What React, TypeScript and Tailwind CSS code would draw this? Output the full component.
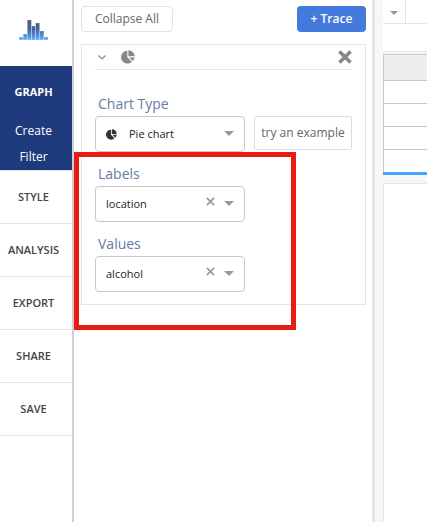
import { useState } from "react";

const bars = [
  [0, 3], [4.15, 6], [8.3, 20], [12.45, 14], [16.6, 17], [20.75, 9], [24.9, 3],
];

function Logo() {
  return (
    <svg width="29" height="20" viewBox="0 0 29 20" aria-label="Logo" role="img">
      <defs>
        <linearGradient id="bar" gradientUnits="userSpaceOnUse" x1="0" y1="0" x2="0" y2="20">
          <stop offset="0" stopColor="#4c5873" />
          <stop offset="0.5" stopColor="#42699f" />
          <stop offset="0.8" stopColor="#5590dc" />
          <stop offset="1" stopColor="#6db0fa" />
        </linearGradient>
      </defs>
      {bars.map(([x, h]) => (
        <rect key={x} x={x} y={20 - h} width="4.1" height={h} fill="url(#bar)" stroke="#fff" strokeOpacity="0.35" strokeWidth="0.8" />
      ))}
    </svg>
  );
}

function PieIcon({ size }: { size: number }) {
  return (
    <svg width={size} height={size} viewBox="0 0 14 14" fill="currentColor" aria-hidden="true">
      <path d="M6.3 .8V7.2L10.9 11.8A6.4 6.4 0 1 1 6.3 .8Z" />
      <path d="M7.4.3A6.3 6.3 0 0 1 13.7 6.3H7.4Z" />
      <path d="M8.2 7.4H13.6A6 6 0 0 1 11.8 11Z" />
    </svg>
  );
}

function Cross({ size, weight }: { size: number; weight: number }) {
  return (
    <svg width={size} height={size} viewBox="0 0 14 14" fill="none" stroke="currentColor" strokeWidth={weight} aria-hidden="true">
      <path d="M1.4 1.4 12.6 12.6M12.6 1.4 1.4 12.6" />
    </svg>
  );
}

function Field({ id, label, options, chart }: { id: string; label: string; options: string[]; chart?: boolean }) {
  const [value, setValue] = useState(options[0]);
  return (
    <div className="w-[150px]">
      <label htmlFor={id} className="block pl-[3px] text-sm leading-6 text-[#667ba3]">{label}</label>
      <div className="relative">
        <select
          id={id}
          value={value}
          onChange={(e) => setValue(e.target.value)}
          className={`block h-9 w-full appearance-none rounded border border-[#c8c8c8] bg-white pr-12 text-[11px] text-[#222] ${chart ? "pl-[33px]" : "pl-[10px]"}`}
        >
          {!chart && <option value=""></option>}
          {options.map((o) => <option key={o}>{o}</option>)}
        </select>
        {chart ? (
          <span className="pointer-events-none absolute top-[13px] left-[11px] text-[#333]"><PieIcon size={11} /></span>
        ) : (
          <button type="button" aria-label={`Clear ${label}`} onClick={() => setValue("")} className="absolute top-[11px] right-[30px] text-[#999]">
            <Cross size={9} weight={2.6} />
          </button>
        )}
        <svg className="pointer-events-none absolute top-[15px] right-[11px] text-[#999]" width="10" height="5" viewBox="0 0 10 5" aria-hidden="true">
          <path d="M0 0H10L5 5Z" fill="currentColor" />
        </svg>
      </div>
    </div>
  );
}

const sections = ["STYLE", "ANALYSIS", "EXPORT", "SHARE", "SAVE"];

export default function App() {
  return (
    <div className="flex min-h-screen bg-white font-['Open_Sans',sans-serif] text-xs">
      <nav className="w-[74px] shrink-0 border-r-2 border-[#cfcfcf] text-center text-[11px]">
        <div className="flex h-[66px] justify-center pt-5 pr-[5px]"><Logo /></div>
        <div className="flex h-[105px] flex-col items-center border-b border-[#e4e4e4] bg-[#1f3a7d] pt-4 pr-[5px] text-white">
          <button type="button" className="mb-4 leading-5 font-bold">GRAPH</button>
          <button type="button" className="text-xs leading-[26px]">Create</button>
          <button type="button" className="text-xs leading-[26px]">Filter</button>
        </div>
        {sections.map((s) => (
          <button key={s} type="button" className="block h-[53px] w-full border-b border-[#e4e4e4] pr-[5px] font-semibold text-[#444]">{s}</button>
        ))}
      </nav>

      <main className="relative min-w-0 flex-1 pt-[6px] pr-[6px] pl-[7px]">
        <div className="flex justify-between">
          <button type="button" className="h-[26px] w-[92px] rounded border border-[#e2e2e2] text-[#666]">Collapse All</button>
          <button type="button" className="h-[26px] w-[69px] rounded bg-[#447adb] font-semibold text-white">+ Trace</button>
        </div>
        <section className="mt-3 border border-[#e5e5e5] px-[13px] pb-3">
          <header className="flex h-[25px] items-center border-b border-[#e5e5e5] text-[#888]">
            <button type="button" aria-label="Collapse trace" className="ml-[3px]">
              <svg width="8" height="5" viewBox="0 0 8 5" fill="none" stroke="currentColor" strokeWidth="1.2" aria-hidden="true"><path d="M.5.5 4 4 7.5.5" /></svg>
            </button>
            <span className="ml-[15px]"><PieIcon size={14} /></span>
            <button type="button" aria-label="Remove trace" className="ml-auto"><Cross size={14} weight={3.6} /></button>
          </header>
          <div className="mt-[22px] flex flex-col gap-[10px]">
            <div className="flex items-start justify-between">
              <Field id="chart-type" label="Chart Type" options={["Pie chart"]} chart />
              <button type="button" className="mt-6 h-[34px] w-[98px] rounded-xs border border-[#ddd] text-xs whitespace-nowrap text-[#666]">try an example</button>
            </div>
            <Field id="labels" label="Labels" options={["location"]} />
            <Field id="values" label="Values" options={["alcohol"]} />
          </div>
        </section>
        <div className="pointer-events-none absolute top-[152px] left-0 h-[178px] w-[222px] border-5 border-[#e81c16]" />
      </main>

      <aside className="flex w-[55px] shrink-0 flex-col border-l-3 border-[#e5e5e5] bg-[#f7f7f7] pl-2">
        <div className="flex h-6 border-b border-[#e5e5e5] bg-white">
          <button type="button" aria-label="Tab options" className="flex w-[23px] items-center justify-center border-r border-[#e5e5e5] pt-[3px]">
            <svg width="8" height="4" viewBox="0 0 8 4" aria-hidden="true"><path d="M0 0H8L4 4Z" fill="#8797b5" /></svg>
          </button>
        </div>
        <div className="h-7 border-b border-[#e5e5e5] bg-white" />
        <table className="mt-[2px] w-full border-separate border-spacing-0 border-t border-l border-[#c8c8c8] bg-white">
          <thead><tr><th className="h-[26px] border-b border-[#c8c8c8] bg-[#eee] p-0" /></tr></thead>
          <tbody>
            <tr><td className="h-[23px] border-b border-[#c8c8c8] p-0" /></tr>
            <tr><td className="h-[23px] border-b border-[#c8c8c8] p-0" /></tr>
            <tr><td className="h-[23px] border-b border-[#c8c8c8] p-0" /></tr>
            <tr><td className="h-[22px] p-0" /></tr>
          </tbody>
        </table>
        <div className="h-[3px] bg-[#44a5fc]" />
        <div className="mt-2 flex-1 border-t border-l border-[#e5e5e5] bg-white" />
      </aside>
    </div>
  );
}
